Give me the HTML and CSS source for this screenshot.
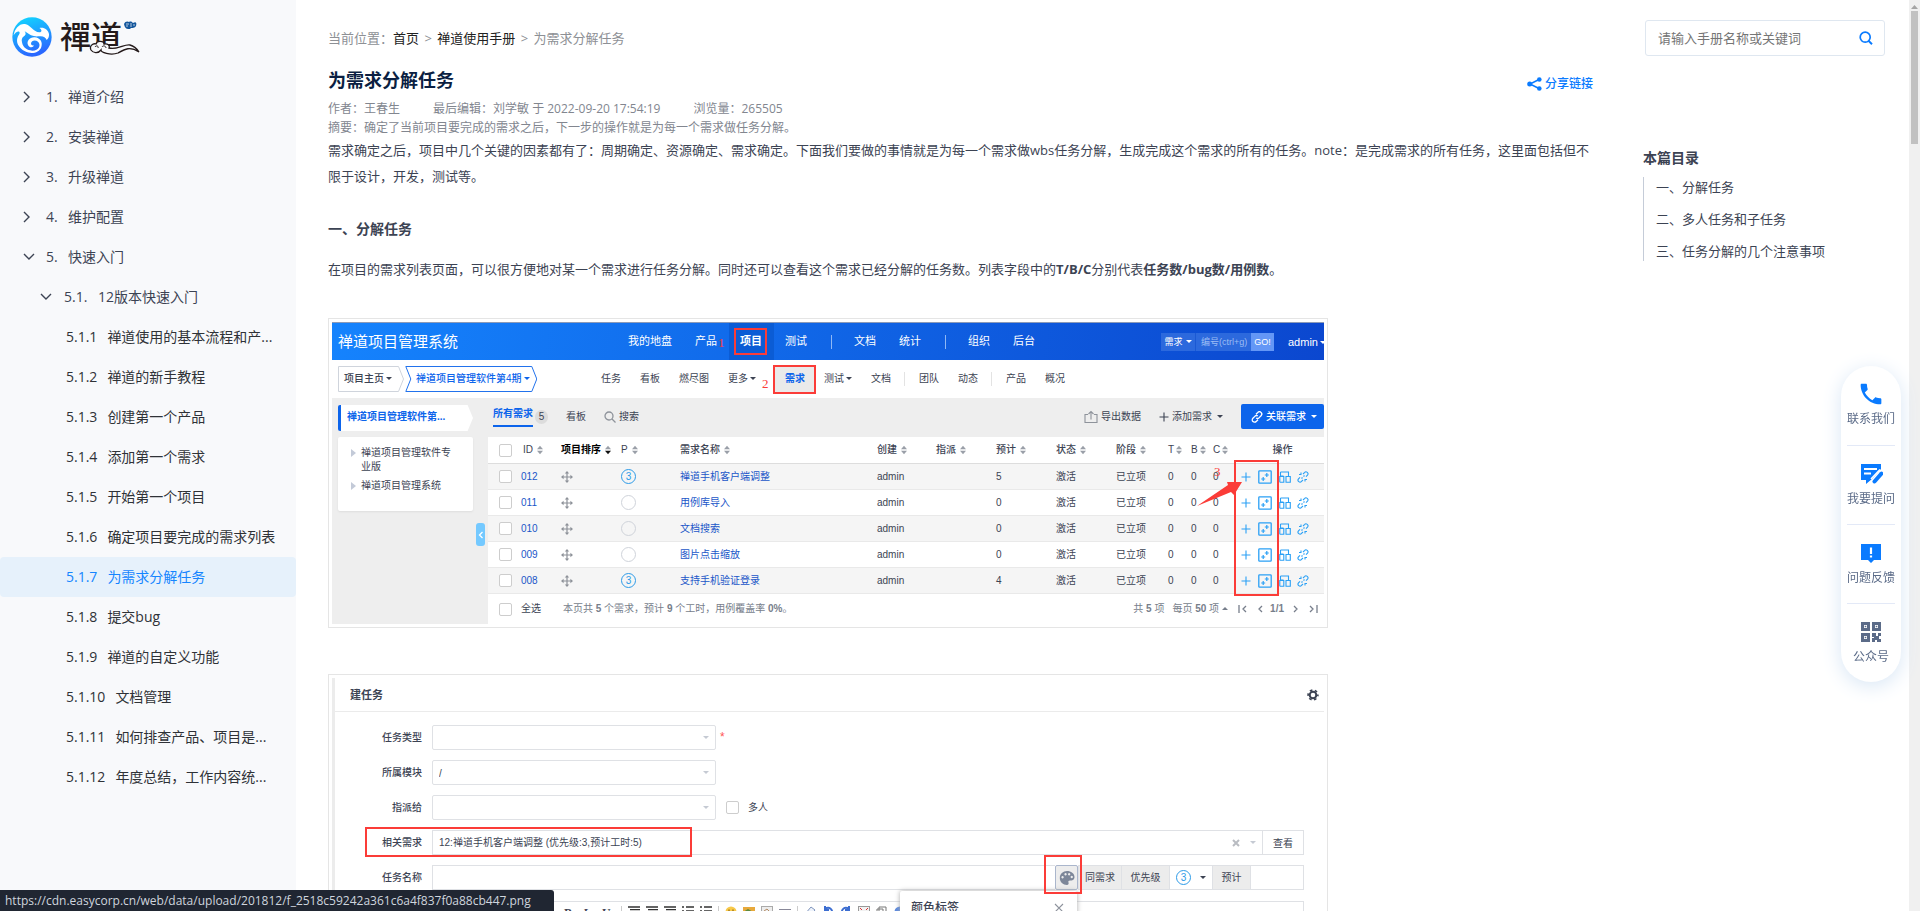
FILE: index.html
```html
<!DOCTYPE html>
<html lang="zh-CN">
<head>
<meta charset="utf-8">
<title>为需求分解任务 - 禅道使用手册</title>
<link rel="stylesheet" href="styles.css">
</head>
<body>
<svg class="defs" aria-hidden="true">
  <symbol id="chev-right" viewBox="0 0 10 14"><path d="M2 2l5 5-5 5" fill="none" stroke="currentColor" stroke-width="1.4"/></symbol>
  <symbol id="chev-down" viewBox="0 0 14 10"><path d="M2 2l5 5 5-5" fill="none" stroke="currentColor" stroke-width="1.4"/></symbol>
  <symbol id="sort" viewBox="0 0 6 10"><path d="M0 4.3L3 .8l3 3.5zM0 5.7l3 3.5 3-3.5z" fill="#9a9fa8"/></symbol>
  <symbol id="sort-down" viewBox="0 0 6 10"><path d="M0 4.3L3 .8l3 3.5z" fill="#9a9fa8"/><path d="M0 5.7l3 3.5 3-3.5z" fill="#111"/></symbol>
  <symbol id="move" viewBox="0 0 12 12"><path d="M6 1v10M1 6h10" stroke="#8e9299" stroke-width="1.2"/><path d="M6 0l2.200 2.600H3.800zM6 12l2.200-2.600H3.800zM0 6l2.600-2.200v4.400zM12 6L9.400 3.800v4.400z" fill="#8e9299"/></symbol>
  <symbol id="plus" viewBox="0 0 10 10"><path d="M5 .5v9M.5 5h9" stroke="currentColor" stroke-width="1.1"/></symbol>
  <symbol id="batch" viewBox="0 0 14 14"><rect x=".8" y=".8" width="12.400" height="12.400" rx=".8" fill="none" stroke="currentColor" stroke-width="1.3"/><path d="M8.800 3v4M6.800 5h4M5.200 7v4M3.200 9h4" stroke="currentColor" stroke-width="1.2"/></symbol>
  <symbol id="blocks" viewBox="0 0 12 12"><path d="M1.500 1h8v4.500M1.500 1v4h3M.8 11.200V7.500M.8 7.500V5.500h4v5.700h-4M7 5.500h4.300v5.700H7z" fill="none" stroke="currentColor" stroke-width="1.1"/></symbol>
  <symbol id="unlink" viewBox="0 0 12 12"><path d="M6 3l1.500-1.400a1.900 1.900 0 0 1 3 2.500L9 5.600M6 9l-1.500 1.400a1.900 1.900 0 0 1-3-2.500L3 6.400M4.500 7.500l1-1M7.500 4.500l-1 1M2 3.500h2v-2M10 8.500H8v2" fill="none" stroke="currentColor" stroke-width="1.100"/></symbol>
  <symbol id="lines" viewBox="0 0 12 12"><path d="M0 1h12M2 3.600h10M0 6.200h12M2 8.800h10" stroke="#333" stroke-width="1.300"/></symbol>
  <symbol id="list" viewBox="0 0 12 12"><path d="M4 1h8M4 5h8M4 9h8" stroke="#333" stroke-width="1.300"/><path d="M0 1h2M0 5h2M0 9h2" stroke="#333" stroke-width="1.300"/></symbol>
</svg>

<div class="page">
  <nav class="sidebar" aria-label="手册目录">
    <a class="brand" href="#">
      <svg class="brand-mark" viewBox="0 0 120 120" aria-hidden="true">
        <defs><linearGradient id="lg" x1="0" y1="0" x2="0.300" y2="1"><stop offset="0" stop-color="#10dcff"/><stop offset="1" stop-color="#2a68ff"/></linearGradient></defs>
        <circle cx="60" cy="60" r="59" fill="url(#lg)"/>
        <path d="M5 55C8 33 25 17 42 22c16 5 22 23 40 24 9 0 8-9 0-13 13-4 27 5 29 18 1 9-3 15-7 18-3-9-12-13-23-11-8 1-17 0-24-3-7-3-12-9-19-12 5 6 3 12-2 15-6 4-8 10-6 18 3 16 15 24 31 25 20 0 27-18 17-27-8-7-20-4-21 5 0 6 5 8 9 6-2 8-14 8-18-1-5-11 5-24 20-23 16 1 25 14 20 29-6 18-31 23-49 13C19 92 11 76 17 60c2-6 6-8 6-13-1-8-13-2-18 8z" fill="#fff"/>
      </svg>
      <span class="brand-word">禪道<svg class="brand-cloud" viewBox="0 0 80 34" aria-hidden="true"><path d="M31 29c-2-4 2-7 5-6 1-4 8-3 8 0 4-1 6 2 5 4 9 2 15-4 21-3 4 1 7 4 9 7-9-6-14-3-21 1-8 3-17-1-17-3-3 4-8 3-10 0" fill="#f8f9fb" stroke="#241a1a" stroke-width="1.300"/><path d="M35 26c1-2 4-1 3 1M42 26c1-2 4-1 4 1" fill="none" stroke="#241a1a"/><path d="M64 3c1-3 4-3 5-2 2-1 3 0 4 1 3-2 4 0 3 3-2 3-5 1-6 3-3 0-5 0-6-5z" fill="#14579c"/><path d="M66 3h3M66 5h2M71 2v4M73 4h2" stroke="#fff" stroke-width=".7"/></svg></span>
    </a>
    <ul class="tree">
      <li><a class="l1" href="#"><svg class="cr"><use href="#chev-right"/></svg><span class="num">1.</span>禅道介绍</a></li>
      <li><a class="l1" href="#"><svg class="cr"><use href="#chev-right"/></svg><span class="num">2.</span>安装禅道</a></li>
      <li><a class="l1" href="#"><svg class="cr"><use href="#chev-right"/></svg><span class="num">3.</span>升级禅道</a></li>
      <li><a class="l1" href="#"><svg class="cr"><use href="#chev-right"/></svg><span class="num">4.</span>维护配置</a></li>
      <li><a class="l1" href="#"><svg class="cd"><use href="#chev-down"/></svg><span class="num">5.</span>快速入门</a></li>
      <li><a class="l2" href="#"><svg class="cd"><use href="#chev-down"/></svg><span class="num">5.1.</span>12版本快速入门</a></li>
      <li><a class="l3" href="#"><span class="num">5.1.1</span><span class="name">禅道使用的基本流程和产...</span></a></li>
      <li><a class="l3" href="#"><span class="num">5.1.2</span><span class="name">禅道的新手教程</span></a></li>
      <li><a class="l3" href="#"><span class="num">5.1.3</span><span class="name">创建第一个产品</span></a></li>
      <li><a class="l3" href="#"><span class="num">5.1.4</span><span class="name">添加第一个需求</span></a></li>
      <li><a class="l3" href="#"><span class="num">5.1.5</span><span class="name">开始第一个项目</span></a></li>
      <li><a class="l3" href="#"><span class="num">5.1.6</span><span class="name">确定项目要完成的需求列表</span></a></li>
      <li><a class="l3 active" href="#"><span class="num">5.1.7</span><span class="name">为需求分解任务</span></a></li>
      <li><a class="l3" href="#"><span class="num">5.1.8</span><span class="name">提交bug</span></a></li>
      <li><a class="l3" href="#"><span class="num">5.1.9</span><span class="name">禅道的自定义功能</span></a></li>
      <li><a class="l3" href="#"><span class="num">5.1.10</span><span class="name">文档管理</span></a></li>
      <li><a class="l3" href="#"><span class="num">5.1.11</span><span class="name">如何排查产品、项目是...</span></a></li>
      <li><a class="l3" href="#"><span class="num">5.1.12</span><span class="name">年度总结，工作内容统...</span></a></li>
    </ul>
  </nav>

  <main class="content">
    <div class="crumbs">当前位置：<a href="#">首页</a> <span>&gt;</span> <a href="#">禅道使用手册</a> <span>&gt;</span> 为需求分解任务</div>
    <header class="head">
      <h1>为需求分解任务</h1>
      <a class="share" href="#"><svg viewBox="0 0 15 14" aria-hidden="true"><path d="M12 2.500L3 7l9 4.500" fill="none" stroke="currentColor" stroke-width="1.500"/><circle cx="12.300" cy="2.500" r="2.300" fill="currentColor"/><circle cx="2.700" cy="7" r="2.500" fill="currentColor"/><circle cx="12.300" cy="11.500" r="2.300" fill="currentColor"/></svg>分享链接</a>
    </header>
    <div class="meta"><span>作者：王春生</span><span>最后编辑：刘学敏 于 2022-09-20 17:54:19</span><span>浏览量：265505</span></div>
    <div class="meta">摘要：确定了当前项目要完成的需求之后，下一步的操作就是为每一个需求做任务分解。</div>
    <p>需求确定之后，项目中几个关键的因素都有了：周期确定、资源确定、需求确定。下面我们要做的事情就是为每一个需求做wbs任务分解，生成完成这个需求的所有的任务。note：是完成需求的所有任务，这里面包括但不限于设计，开发，测试等。</p>
    <h2>一、分解任务</h2>
    <p class="after-h">在项目的需求列表页面，可以很方便地对某一个需求进行任务分解。同时还可以查看这个需求已经分解的任务数。列表字段中的<b>T/B/C</b>分别代表<b>任务数/bug数/用例数</b>。</p>

    <figure class="shot shot-list">
      <div class="app-bar">
        <span class="app-name">禅道项目管理系统</span>
        <a href="#">我的地盘</a><a href="#">产品</a><a class="on" href="#">项目</a><a href="#">测试</a><i></i><a href="#">文档</a><a href="#">统计</a><i></i><a href="#">组织</a><a href="#">后台</a>
        <div class="quick"><button type="button">需求<span class="caret"></span></button><input type="text" aria-label="编号" placeholder="编号(ctrl+g)"><button type="button" class="go">GO!</button></div>
        <button type="button" class="user">admin<span class="caret"></span></button>
      </div>
      <div class="sub-bar">
        <div class="path">
          <button type="button" class="p1"><svg viewBox="0 0 66 26"><path d="M.5.500h60l5 12.500-5 12.500h-60z" fill="#fff" stroke="#cfd4dc"/></svg>项目主页<span class="caret"></span></button>
          <button type="button" class="p2"><svg viewBox="0 0 132 26"><path d="M.8.500h126l5 12.500-5 12.500H.8l5-12.500z" fill="#fff" stroke="#2272ec"/></svg>禅道项目管理软件第4期<span class="caret"></span></button>
        </div>
        <a href="#">任务</a><a href="#">看板</a><a href="#">燃尽图</a><a class="more" href="#">更多<span class="caret"></span></a><a class="on" href="#">需求</a><a href="#">测试<span class="caret"></span></a><a href="#">文档</a><i></i><a href="#">团队</a><a href="#">动态</a><i></i><a href="#">产品</a><a href="#">概况</a>
      </div>
      <div class="work">
        <div class="side">
          <div class="side-title">禅道项目管理软件第...</div>
          <ul><li>禅道项目管理软件专业版</li><li>禅道项目管理系统</li></ul>
          <button type="button" class="fold" aria-label="收起"><svg viewBox="0 0 6 8"><path d="M4.500 1L1.500 4l3 3" fill="none" stroke="#fff" stroke-width="1.300"/></svg></button>
        </div>
        <div class="board">
          <div class="tools">
            <a class="tab" href="#">所有需求</a><span class="badge">5</span><a class="t2" href="#">看板</a>
            <a class="t3" href="#"><svg viewBox="0 0 12 12"><circle cx="5" cy="5" r="4" fill="none" stroke="#8e939b" stroke-width="1.300"/><path d="M8 8l3.500 3.500" stroke="#8e939b" stroke-width="1.300"/></svg>搜索</a>
            <span class="grow"></span>
            <button type="button"><svg class="w14" viewBox="0 0 14 14"><path d="M4 4.500H1v8h12v-8h-3M7 9.500V1.500M4.500 4L7 1.500 9.500 4" fill="none" stroke="#8e939b" stroke-width="1.100"/></svg>导出数据</button>
            <button type="button" class="add"><svg class="w10"><use href="#plus"/></svg>添加需求<span class="caret"></span></button>
            <button type="button" class="primary"><svg viewBox="0 0 12 12"><path d="M5 3.200l1.800-1.700a2.200 2.200 0 0 1 3.300 3.200L7.900 6.900a2 2 0 0 1-2.700 0M7 8.800l-1.800 1.700a2.200 2.200 0 0 1-3.300-3.200l2.200-2.200a2 2 0 0 1 2.700 0" fill="none" stroke="#fff" stroke-width="1.300"/></svg>关联需求<span class="caret"></span></button>
          </div>
          <table>
            <colgroup><col class="c33"><col class="c40"><col class="c60"><col class="c59"><col><col class="c59"><col class="c60"><col class="c60"><col class="c60"><col class="c52"><col class="c23"><col class="c22"><col class="c28"><col class="c83"></colgroup>
            <thead><tr><th><input type="checkbox" aria-label="全部"></th><th class="pl">ID<svg class="s"><use href="#sort"/></svg></th><th class="strong">项目排序<svg class="s"><use href="#sort-down"/></svg></th><th>P<svg class="s"><use href="#sort"/></svg></th><th>需求名称<svg class="s"><use href="#sort"/></svg></th><th>创建<svg class="s"><use href="#sort"/></svg></th><th>指派<svg class="s"><use href="#sort"/></svg></th><th>预计<svg class="s"><use href="#sort"/></svg></th><th>状态<svg class="s"><use href="#sort"/></svg></th><th>阶段<svg class="s"><use href="#sort"/></svg></th><th>T<svg class="s t"><use href="#sort"/></svg></th><th>B<svg class="s t"><use href="#sort"/></svg></th><th>C<svg class="s t"><use href="#sort"/></svg></th><th class="ops">操作</th></tr></thead>
            <tbody>
              <tr><td><input type="checkbox" aria-label="012"></td><td><a href="#">012</a></td><td><svg class="mv"><use href="#move"/></svg></td><td><span class="pri p3">3</span></td><td><a href="#">禅道手机客户端调整</a></td><td>admin</td><td></td><td>5</td><td>激活</td><td>已立项</td><td>0</td><td>0</td><td>0</td><td><span class="acts"><svg class="w10"><use href="#plus"/></svg><svg class="w14"><use href="#batch"/></svg><svg><use href="#blocks"/></svg><svg><use href="#unlink"/></svg></span></td></tr>
              <tr><td><input type="checkbox" aria-label="011"></td><td><a href="#">011</a></td><td><svg class="mv"><use href="#move"/></svg></td><td><span class="pri"></span></td><td><a href="#">用例库导入</a></td><td>admin</td><td></td><td>0</td><td>激活</td><td>已立项</td><td>0</td><td>0</td><td>0</td><td><span class="acts"><svg class="w10"><use href="#plus"/></svg><svg class="w14"><use href="#batch"/></svg><svg><use href="#blocks"/></svg><svg><use href="#unlink"/></svg></span></td></tr>
              <tr><td><input type="checkbox" aria-label="010"></td><td><a href="#">010</a></td><td><svg class="mv"><use href="#move"/></svg></td><td><span class="pri"></span></td><td><a href="#">文档搜索</a></td><td>admin</td><td></td><td>0</td><td>激活</td><td>已立项</td><td>0</td><td>0</td><td>0</td><td><span class="acts"><svg class="w10"><use href="#plus"/></svg><svg class="w14"><use href="#batch"/></svg><svg><use href="#blocks"/></svg><svg><use href="#unlink"/></svg></span></td></tr>
              <tr><td><input type="checkbox" aria-label="009"></td><td><a href="#">009</a></td><td><svg class="mv"><use href="#move"/></svg></td><td><span class="pri"></span></td><td><a href="#">图片点击缩放</a></td><td>admin</td><td></td><td>0</td><td>激活</td><td>已立项</td><td>0</td><td>0</td><td>0</td><td><span class="acts"><svg class="w10"><use href="#plus"/></svg><svg class="w14"><use href="#batch"/></svg><svg><use href="#blocks"/></svg><svg><use href="#unlink"/></svg></span></td></tr>
              <tr><td><input type="checkbox" aria-label="008"></td><td><a href="#">008</a></td><td><svg class="mv"><use href="#move"/></svg></td><td><span class="pri p3">3</span></td><td><a href="#">支持手机验证登录</a></td><td>admin</td><td></td><td>4</td><td>激活</td><td>已立项</td><td>0</td><td>0</td><td>0</td><td><span class="acts"><svg class="w10"><use href="#plus"/></svg><svg class="w14"><use href="#batch"/></svg><svg><use href="#blocks"/></svg><svg><use href="#unlink"/></svg></span></td></tr>
            </tbody>
          </table>
          <div class="foot">
            <label><input type="checkbox">全选</label>
            <span class="sum">本页共 <b>5</b> 个需求，预计 <b>9</b> 个工时，用例覆盖率 <b>0%</b>。</span>
            <span class="grow"></span>
            <span>共 <b>5</b> 项</span><span>每页 <b>50</b> 项<span class="caret up"></span></span>
            <svg class="pager" viewBox="0 0 26 8"><path d="M1 0v8M8 1L5 4l3 3M24 1l-3 3 3 3" fill="none" stroke="#777e8b" stroke-width="1.300"/></svg><b>1/1</b><svg class="pager" viewBox="0 0 26 8"><path d="M2 1l3 3-3 3M18 1l3 3-3 3M25 0v8" fill="none" stroke="#777e8b" stroke-width="1.300"/></svg>
          </div>
        </div>
      </div>
      <span class="mark m-project"></span><span class="mark m-story"></span><span class="mark m-ops"></span>
      <span class="step s1">1</span><span class="step s2">2</span><span class="step s3">3</span>
      <svg class="arrow" viewBox="0 0 46 28" aria-hidden="true"><path d="M0 27L31 6l-1-3L45 3 37 16l-3-3z" fill="#fb3c38"/></svg>
    </figure>

    <figure class="shot shot-form">
      <div class="form-head"><span>建任务</span><svg viewBox="0 0 12 12"><circle cx="6" cy="6" r="3.300" fill="none" stroke="#3c4353" stroke-width="2"/><circle cx="6" cy="6" r="4.900" fill="none" stroke="#3c4353" stroke-width="1.600" stroke-dasharray="2.570 2.560" stroke-dashoffset="1.280"/></svg></div>
      <div class="form">
        <label for="f1">任务类型</label><div class="row"><div class="half"><select id="f1"><option></option></select><span class="caret pale"></span></div><span class="req">*</span></div>
        <label for="f2">所属模块</label><div class="row"><div class="half"><select id="f2"><option>/</option></select><span class="caret pale"></span></div></div>
        <label for="f3">指派给</label><div class="row"><div class="half"><select id="f3"><option></option></select><span class="caret pale"></span></div><label class="multi"><input type="checkbox">多人</label></div>
        <label for="f4">相关需求</label><div class="row"><div class="pick"><input id="f4" type="text" value="12:禅道手机客户端调整 (优先级:3,预计工时:5)"><svg viewBox="0 0 8 8"><path d="M1 1l6 6M7 1L1 7" stroke="#b9bcc2" stroke-width="2"/></svg><span class="caret pale"></span></div><button type="button" class="view">查看</button></div>
        <label for="f5">任务名称</label><div class="row"><input id="f5" class="title-in" type="text"><button type="button" class="palette" aria-label="颜色标签"><svg viewBox="0 0 16 16"><path fill-rule="evenodd" d="M8 1c4 0 7.500 2.500 7.500 6 0 3-2.500 3.500-4.500 3.500-1.500 0-2 .8-1.500 2 .5 1.300-.2 2.500-1.500 2.500C4 15 .8 12 .8 8 .8 4 4 1 8 1zM3.500 6a1.200 1.200 0 1 0 .1 0zm3-3a1.200 1.200 0 1 0 .1 0zm3.600 0a1.200 1.200 0 1 0 .1 0zm2.600 2.800a1.200 1.200 0 1 0 .1 0z" fill="#7d8799"/></svg></button><span class="addon same">同需求</span><span class="addon pr">优先级</span><button type="button" class="prio"><span class="pri p3">3</span><span class="caret"></span></button><span class="addon est">预计</span><input class="est-in" type="text" aria-label="预计"></div>
      </div>
      <div class="editor">
        <b>B</b><b><em>I</em></b><b><u>U</u></b><i></i>
        <svg><use href="#lines"/></svg><svg><use href="#lines"/></svg><svg><use href="#lines"/></svg><svg><use href="#list"/></svg><svg><use href="#list"/></svg><i></i>
        <svg viewBox="0 0 12 12"><circle cx="6" cy="6" r="5.500" fill="#f8c94a"/><path d="M4 3.500v2M8 3.500v2" stroke="#7a5200"/></svg>
        <svg viewBox="0 0 12 12"><rect y="1" width="12" height="10" fill="#e8a93c"/><path d="M0 6l5-3 7 4" fill="#5d8a3c"/></svg>
        <svg viewBox="0 0 12 12"><rect x=".5" y=".5" width="11" height="11" fill="#ededed" stroke="#aaa"/><path d="M3 5l3-2 3 3" stroke="#b28a63" fill="none"/></svg>
        <svg viewBox="0 0 12 12"><path d="M0 3.500h12M0 6h12" stroke="#889"/></svg><i></i>
        <svg viewBox="0 0 12 12"><path d="M1 8l6-7 4 3-6 7z" fill="#eef3fb" stroke="#7f95bd"/></svg>
        <svg viewBox="0 0 12 12"><path d="M3 3c4-3 8 0 7 5M3 0v4h4" fill="none" stroke="#3d6ed1" stroke-width="2"/></svg>
        <svg viewBox="0 0 12 12"><path d="M9 3C5 0 1 3 2 8M9 0v4H5" fill="none" stroke="#3d6ed1" stroke-width="2"/></svg>
        <svg viewBox="0 0 12 12"><rect x=".5" y=".5" width="11" height="9" fill="#f2f2f2" stroke="#999"/><path d="M2 2l2 2M10 2L8 4" stroke="#d33"/></svg>
        <svg viewBox="0 0 12 12"><path d="M3 1h7v9H3zM1 3h6v7H1z" fill="#fff" stroke="#777"/></svg>
        <svg viewBox="0 0 12 12"><circle cx="6" cy="6" r="5.500" fill="#5b8ae0"/></svg>
      </div>
      <div class="popup"><span>颜色标签</span><svg viewBox="0 0 10 10"><path d="M1 1l8 8M9 1L1 9" stroke="#8d929c" stroke-width="1.100"/></svg></div>
      <span class="mark m-rel"></span><span class="mark m-pal"></span>
    </figure>
  </main>

  <aside class="aside">
    <form class="search"><input type="search" aria-label="搜索手册" placeholder="请输入手册名称或关键词"><button type="button" aria-label="搜索"><svg viewBox="0 0 14 14"><circle cx="6.200" cy="6.200" r="5" fill="none" stroke="currentColor" stroke-width="1.700"/><path d="M9.500 9.800l3.500 3.400" stroke="currentColor" stroke-width="1.900"/></svg></button></form>
    <h3>本篇目录</h3>
    <ul class="toc"><li><a href="#">一、分解任务</a></li><li><a href="#">二、多人任务和子任务</a></li><li><a href="#">三、任务分解的几个注意事项</a></li></ul>
  </aside>
  <div class="scroll" aria-hidden="true"><svg viewBox="0 0 7 4"><path d="M0 4l3.500-4L7 4z" fill="#a5a5a5"/></svg><span></span></div>
</div>

<div class="float">
  <a href="#"><svg viewBox="0 0 24 24"><path d="M6.600 10.800c1.400 2.800 3.800 5.100 6.600 6.600l2.200-2.200c.3-.3.700-.4 1-.2 1.100.4 2.300.6 3.600.6.600 0 1 .4 1 1V20c0 .6-.4 1-1 1C10.600 21 3 13.400 3 4c0-.6.400-1 1-1h3.500c.6 0 1 .4 1 1 0 1.300.2 2.500.6 3.600.1.300 0 .7-.2 1z" transform="translate(-1.800 -1.800) scale(1.150)" fill="#0a7bff"/></svg>联系我们</a>
  <a href="#"><svg viewBox="0 0 24 24"><path d="M2 2h20v5l-9 10-6 5v-4H2z" fill="#0a7bff"/><path d="M5 7h13M5 11.500h7" stroke="#fff" stroke-width="2"/><path d="M15.500 19.500l7-8" stroke="#0a7bff" stroke-width="4" stroke-linecap="round"/><path d="M12 17l9-9.500" stroke="#fff" stroke-width="1.600"/></svg>我要提问</a>
  <a href="#"><svg viewBox="0 0 24 24"><path d="M2 3h20v16h-7l-3 3-3-3H2z" fill="#0a7bff"/><path d="M12 6.500v6.500M12 14.500v2" stroke="#fff" stroke-width="2.200"/></svg>问题反馈</a>
  <a href="#"><svg viewBox="0 0 24 24"><path d="M3.500 3.500h6v6h-6zM14.500 3.500h6v6h-6zM3.500 14.500h6v6h-6z" fill="none" stroke="#5b6b88" stroke-width="3"/><path d="M5.700 5.700h1.600v1.600H5.700zM16.700 5.700h1.600v1.600h-1.600zM5.700 16.700h1.600v1.600H5.700zM13 13h4v3h2v-3h3v3h-2v3h2v3h-4v-2h-2v2h-3v-4h2v-1h-2z" fill="#5b6b88"/></svg>公众号</a>
</div>
<div class="status">https://cdn.easycorp.cn/web/data/upload/201812/f_2518c59242a361c6a4f837f0a88cb447.png</div>
</body>
</html>
```

FILE: styles.css
```css
* { box-sizing: border-box; }
body { margin: 0; font: 13px/20px "Open Sans", "Noto Sans CJK SC", sans-serif; color: #3c4353; background: #fff; }
a { color: inherit; text-decoration: none; }
ul { list-style: none; margin: 0; padding: 0; }
button, input, select { font: inherit; color: inherit; margin: 0; padding: 0; border: 0; background: none; border-radius: 0; }
svg { width: 12px; height: 12px; flex: none; }
.defs { position: absolute; width: 0; height: 0; }
.page { display: flex; height: 100vh; overflow: hidden; }
.grow { flex: 1; }

/* chapter tree */
.sidebar { flex: 0 0 296px; min-width: 0; background: #f8f9fb; font-size: 14px; }
.brand { display: flex; align-items: center; gap: 8px; height: 77px; padding: 0 0 4px 12px; }
.brand-mark { width: 40px; height: 40px; }
.brand-word { position: relative; font: 500 31px/32px "Noto Sans CJK TC", sans-serif; color: #241a1a; padding-bottom: 4px; }
.brand-cloud { position: absolute; left: 0; top: 2px; width: 80px; height: 34px; }
.tree a { display: flex; align-items: center; height: 40px; border-radius: 4px; }
.tree .cr { width: 10px; height: 14px; }
.tree .cd { width: 14px; height: 10px; }
.l1 { padding-left: 22px; }
.l1 .num { width: 22px; margin-left: 14px; }
.l1 .cd + .num { margin-left: 10px; }
.l2 { padding-left: 39px; }
.l2 .num { width: 34px; margin-left: 11px; }
.l3 { padding: 0 16px 0 66px; gap: 10px; color: #2f3237; }
.l3 .name { white-space: nowrap; }
.tree .active { background: #e6f1fb; color: #1585ff; }

/* article */
.content { flex: 1; min-width: 0; padding: 28px 0 0 32px; }
.crumbs { color: #8d9095; }
.crumbs a { color: #222; }
.crumbs span { margin: 0 2px; }
.head { display: flex; justify-content: space-between; align-items: center; margin-top: 18px; }
h1 { margin: 0; font-size: 18px; line-height: 28px; color: #0b1f42; }
.share { display: flex; align-items: center; gap: 3px; font-size: 12px; font-weight: 500; color: #0a7bff; padding-top: 8px; }
.share svg { width: 15px; height: 14px; }
.head + .meta { margin-top: 5px; }
.meta { display: flex; gap: 33px; font-size: 12px; line-height: 19px; color: #82868f; }
p { margin: 0; line-height: 26px; }
h2 { margin: 28px 0 15px; font-size: 14px; line-height: 24px; }

/* pictures in the article */
.shot { position: relative; z-index: 0; max-width: 1000px; margin: 36px 0 0; padding: 3px; border: 1px solid #e5e5e5; font: 10px/14px "Liberation Sans", "Noto Sans CJK SC", sans-serif; white-space: nowrap; }
.caret { display: inline-block; width: 5px; margin-left: 3px; border: solid transparent; border-width: 3px 3px 0; border-top-color: currentColor; vertical-align: 2px; }
.caret.up { border-width: 0 3px 3px; border-bottom-color: currentColor; }
.caret.pale { color: #c5cad3; }
.shot input[type=checkbox] { appearance: none; width: 13px; height: 13px; border: 1px solid #cdcdcd; border-radius: 2px; background: #fff; }
.app-bar { display: flex; align-items: center; height: 38px; padding-left: 6px; color: #fff; font-size: 11px; background: linear-gradient(100deg, #1583fd, #0b47cf); border-top: 1px solid #8b9ab8; }
.app-name { width: 279px; font-size: 15px; }
.app-bar > a { padding: 0 12px 0 11px; line-height: 37px; }
.app-bar > .on { background: #0b5cd5; font-weight: bold; }
.app-bar > i { width: 24px; height: 14px; background: linear-gradient(#8fb8f5, #8fb8f5) center / 1px 100% no-repeat; }
.quick { display: flex; margin-left: auto; height: 18px; font-size: 9px; background: #2c69dd; }
.quick button { width: 34px; }
.quick input { width: 56px; padding-left: 5px; border-left: 1px solid #1b59d3; }
.quick input::placeholder { color: #9dbdf4; opacity: 1; }
.quick .go { width: 23px; background: #6497f6; font-size: 9px; }
.user { width: 50px; padding-left: 14px; font-size: 11px; overflow: hidden; text-align: left; }
.user .caret { margin-left: 2px; }
.sub-bar { display: flex; align-items: center; height: 38px; padding-left: 6px; color: #3c4353; }
.path { display: flex; gap: 1px; width: 253px; }
.path button { position: relative; height: 26px; text-align: left; font-weight: 500; }
.path svg { position: absolute; inset: 0; width: 100%; height: 100%; z-index: -1; }
.p1 { width: 66px; padding-left: 6px; }
.p2 { width: 132px; padding-left: 11px; color: #0c64eb; }
.sub-bar > a { padding: 0 9px 0 10px; }
.sub-bar .caret { margin-left: 2px; }
.sub-bar > .more { margin-right: 10px; }
.sub-bar > .on { line-height: 26px; background: #eaeaea; color: #0c64eb; font-weight: bold; }
.sub-bar > i { width: 9px; height: 14px; background: linear-gradient(#e3e3e3, #e3e3e3) center / 1px 100% no-repeat; }
.work { display: grid; grid-template-columns: 156px minmax(0, 1fr); background: #eee; }
.side { position: relative; padding: 7px 15px 0 6px; }
.side-title { height: 26px; padding-left: 6px; line-height: 24px; color: #0c64eb; font-weight: bold; border-left: 3px solid #0c64eb; background: #fff; border-radius: 2px; clip-path: polygon(0 0, 96% 0, 100% 50%, 96% 100%, 0 100%); }
.side ul { margin-top: 6px; height: 74px; padding: 9px 22px 0 13px; background: #fff; border-radius: 2px; white-space: normal; box-shadow: 0 1px 2px #ddd; }
.side li { display: flex; align-items: flex-start; gap: 5px; margin-bottom: 5px; }
.side li::before { content: ""; flex: none; margin-top: 3px; border: solid transparent; border-width: 4px 0 4px 5px; border-left-color: #c3cad8; }
.fold { position: absolute; right: 3px; top: 125px; width: 9px; height: 23px; border-radius: 3px; background: #74c9ff; }
.fold svg { display: block; width: 6px; height: 8px; margin: auto; }
.tools { display: flex; align-items: center; height: 39px; padding: 0 0 2px 5px; }
.tools .tab { height: 20px; color: #0c64eb; font-weight: bold; border-bottom: 2px solid #0c64eb; }
.badge { width: 13px; margin-left: 2px; border-radius: 7px; background: #dcdcdc; text-align: center; }
.t2 { margin-left: 18px; }
.t3, .tools button { display: flex; align-items: center; gap: 3px; margin-left: 18px; }
.tools .caret { margin-left: 2px; }
.w10 { width: 10px; height: 10px; }
.w14 { width: 14px; height: 14px; }
.tools .primary { height: 25px; width: 83px; padding-left: 10px; background: #0c64eb; color: #fff; font-weight: 500; border-radius: 2px; }
table { width: 100%; table-layout: fixed; border-collapse: separate; border-spacing: 0; background: #fff; }
th, td { height: 26px; padding: 0; text-align: left; font-weight: normal; border-bottom: 1px solid #e9e9e9; }
th { height: 27px; font-weight: 500; border-bottom-color: #ddd; }
th:first-child, td:first-child { padding-left: 11px; }
table input, table svg { display: block; }
table .s { display: inline-block; width: 6px; height: 10px; margin-left: 4px; vertical-align: -2px; }
table .s.t { margin-left: 2px; }
.pl { padding-left: 2px; }
.strong { color: #000; font-weight: bold; }
.ops { text-align: center; }
tbody tr:nth-child(odd) { background: #f5f5f5; }
tbody a { color: #1a56c8; }
.pri { display: block; width: 15px; height: 15px; border: 1px solid #cfd3da; border-radius: 8px; line-height: 13px; text-align: center; }
.p3 { border-color: #2d9be8; color: #2d9be8; }
.acts { display: grid; grid-template-columns: 17px 21px 18px 12px; align-items: center; color: #2aa0f5; }
.c22 { width: 22px; } .c23 { width: 23px; } .c28 { width: 28px; } .c33 { width: 33px; } .c40 { width: 40px; }
.c52 { width: 52px; } .c59 { width: 59px; } .c60 { width: 60px; } .c83 { width: 83px; }
.foot { display: flex; align-items: center; gap: 8px; height: 30px; padding: 0 6px 0 11px; background: #fff; color: #777e8b; }
.foot label { display: flex; align-items: center; gap: 9px; color: #3c4353; }
.sum { margin-left: 14px; }
.pager { width: 26px; height: 8px; margin-left: 2px; }
.pager + b { margin: 0 -2px; }

/* red callouts drawn over the pictures */
.mark { position: absolute; border: 2px solid #fb3c38; }
.m-project { left: 405px; top: 9px; width: 33px; height: 27px; }
.m-story { left: 444px; top: 46px; width: 43px; height: 29px; }
.m-ops { left: 905px; top: 141px; width: 45px; height: 136px; }
.m-rel { left: 36px; top: 152px; width: 327px; height: 30px; }
.m-pal { left: 715px; top: 180px; width: 38px; height: 39px; }
.step { position: absolute; color: #fb3c38; font: 13px/14px "Liberation Serif", serif; }
.s1 { left: 389px; top: 17px; }
.s2 { left: 433px; top: 58px; }
.s3 { left: 885px; top: 146px; }
.arrow { position: absolute; left: 868px; top: 160px; width: 46px; height: 28px; }

/* task form */
.shot-form { margin-top: 46px; height: 320px; }
.shot-form::before { content: ""; position: absolute; left: 3px; top: 3px; bottom: 0; width: 3px; background: #ececec; }
.form-head { display: flex; justify-content: space-between; align-items: center; height: 34px; margin-left: 3px; padding: 0 5px 0 15px; border-bottom: 1px solid #ebebeb; font-size: 11px; font-weight: bold; }
.form { display: grid; grid-template-columns: 90px minmax(0, 1fr); gap: 10px; padding: 13px 20px 0 0; line-height: 25px; }
.form > label { text-align: right; font-weight: 500; }
.row { display: flex; align-items: stretch; height: 25px; }
.half { display: flex; align-items: center; width: 284px; padding-right: 6px; border: 1px solid #dfe1e5; border-radius: 2px; }
.half select { flex: 1; height: 23px; padding-left: 6px; appearance: none; }
.req { margin-left: 4px; color: #f55; font-size: 12px; }
.multi { display: flex; align-items: center; gap: 9px; margin-left: 10px; }
.pick { flex: 1; display: flex; align-items: center; padding-right: 6px; border: 1px solid #dfe1e5; }
.pick input { flex: 1; padding-left: 6px; height: 23px; }
.pick svg { width: 8px; height: 8px; }
.pick .caret { margin-left: 10px; }
.view { width: 41px; border: solid #dfe1e5; border-width: 1px 1px 1px 0; }
.title-in { flex: 1; min-width: 0; border: solid #dfe1e5; border-width: 1px 0 1px 1px; }
.palette { width: 23px; border: 1px solid #aab6cc; border-radius: 2px; background: #ededed; }
.palette svg { display: block; width: 16px; height: 16px; margin: auto; }
.addon { border: 1px solid #dfe1e5; background: #ececec; text-align: center; line-height: 23px; }
.same { width: 44px; }
.pr { width: 48px; border-left: 0; }
.prio { display: flex; align-items: center; gap: 6px; width: 42px; padding-left: 6px; border: solid #dfe1e5; border-width: 1px 0; }
.est { width: 39px; }
.est-in { width: 53px; border: solid #dfe1e5; border-width: 1px 1px 1px 0; }
.editor { display: flex; gap: 6px; height: 40px; margin: 11px 20px 0 100px; padding: 4px 0 0 131px; border: 1px solid #dfe1e5; }
.editor b { width: 13px; font: bold 12px/14px "Liberation Serif", serif; }
.editor i { width: 1px; height: 14px; background: #ccc; }
.popup { position: absolute; left: 571px; top: 216px; width: 177px; height: 100px; padding: 10px 13px 0 11px; display: flex; justify-content: space-between; background: #fff; border-radius: 2px; box-shadow: 0 0 5px #aaa; font-size: 12px; font-weight: 500; }
.popup svg { width: 10px; height: 10px; margin-top: 2px; }

/* right column */
.aside { flex: 0 0 316px; padding: 20px 24px 0 50px; }
.search { display: flex; align-items: center; height: 36px; margin-left: 2px; padding: 0 11px 0 12px; border: 1px solid #dfe7f0; border-radius: 3px; }
.search input { flex: 1; min-width: 0; height: 30px; outline: 0; }
.search input::placeholder { color: #757575; opacity: 1; }
.search button { color: #0a7bff; height: 16px; }
.search svg { display: block; width: 14px; height: 14px; }
h3 { margin: 92px 0 9px; font-size: 14px; line-height: 20px; }
.toc { padding-left: 12px; border-left: 1px solid #c5ccd8; line-height: 20px; display: grid; gap: 12px; }
.scroll { flex: 0 0 11px; padding: 5px 2px 0; background: #f0f0f0; text-align: center; }
.scroll svg { display: block; width: 7px; height: 4px; }
.scroll span { display: block; height: 133px; margin-top: 2px; background: #c1c1c1; }

/* contact rail */
.float { position: fixed; right: 19px; top: 366px; width: 60px; padding: 0 6px; border-radius: 30px; background: #fff; box-shadow: 0 4px 20px #d8e6f5; font-size: 12px; color: #5b6b88; }
.float a { display: flex; flex-direction: column; align-items: center; height: 79px; padding-top: 16px; line-height: 26px; white-space: nowrap; }
.float a + a { border-top: 1px solid #e3e9f7; }
.float svg { width: 24px; height: 24px; }

/* link preview */
.status { position: fixed; left: 0; bottom: 0; min-width: 554px; padding: 0 7px 0 5px; background: #202632; color: #cfd5de; border-top-right-radius: 3px; font: 12px/21px "Open Sans", sans-serif; }
```
